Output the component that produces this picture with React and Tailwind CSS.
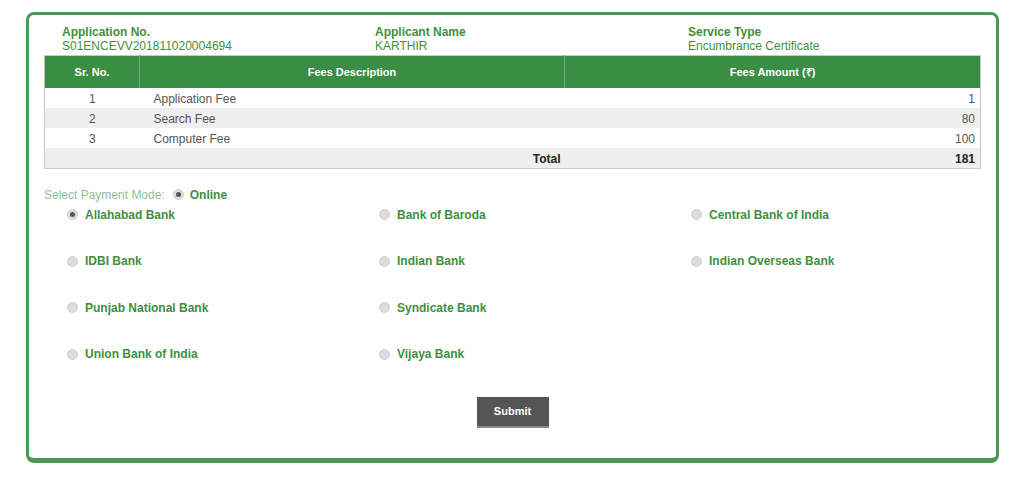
import React from 'react';

const FEES = [
  { sr: 1, desc: 'Application Fee', amt: 1 },
  { sr: 2, desc: 'Search Fee', amt: 80 },
  { sr: 3, desc: 'Computer Fee', amt: 100 },
];

const BANKS = [
  'Allahabad Bank', 'Bank of Baroda', 'Central Bank of India',
  'IDBI Bank', 'Indian Bank', 'Indian Overseas Bank',
  'Punjab National Bank', 'Syndicate Bank', '',
  'Union Bank of India', 'Vijaya Bank', '',
];

const Radio = ({ checked }) => (
  <span className="w-[11px] h-[11px] rounded-full bg-[#dcdcdc] border border-[#cfcfcf] flex items-center justify-center shrink-0">
    {checked && <span className="w-[5px] h-[5px] rounded-full bg-[#555]" />}
  </span>
);

const Info = ({ label, value }) => (
  <div className="leading-[14px] text-[12px]">
    <div className="font-bold text-[#3f8f3f]">{label}</div>
    <div className="text-[#3f8f3f]">{value}</div>
  </div>
);

export default function App() {
  return (
    <div className="w-[1024px] h-[480px] bg-white pt-[12px] pl-[26px]" style={{ fontFamily: '"Liberation Sans", Arial, sans-serif' }}>
      <div className="w-[973px] h-[451px] border-[3px] border-b-[5px] border-[#4a9a55] rounded-[8px] pt-[10px] px-[15px]">
        <div className="grid grid-cols-[313px_313px_313px] pl-[18px]">
          <Info label="Application No." value="S01ENCEVV201811020004694" />
          <Info label="Applicant Name" value="KARTHIR" />
          <Info label="Service Type" value="Encumbrance Certificate" />
        </div>

        <table className="w-[937px] mt-[2px] border border-[#c9c9c9] border-collapse text-[12px] text-[#555]">
          <thead>
            <tr className="bg-[#3b8d46] text-white h-[32px] text-[11px] font-bold">
              <th className="w-[95px] border-r border-[#6fb07a] font-bold">Sr. No.</th>
              <th className="w-[425px] border-r border-[#6fb07a] font-bold">Fees Description</th>
              <th className="font-bold">Fees Amount (₹)</th>
            </tr>
          </thead>
          <tbody>
            {FEES.map((f, i) => (
              <tr key={f.sr} className={`h-[20px] ${i % 2 ? 'bg-[#efefef]' : 'bg-white'}`}>
                <td className="text-center pt-[2px]">{f.sr}</td>
                <td className="pl-[14px] pt-[2px]">{f.desc}</td>
                <td className="text-right pr-[5px] pt-[2px]">{f.amt}</td>
              </tr>
            ))}
            <tr className="h-[20px] bg-[#efefef] font-bold text-[#222]">
              <td />
              <td className="text-right pr-[4px] pt-[2px]">Total</td>
              <td className="text-right pr-[5px] pt-[2px]">181</td>
            </tr>
          </tbody>
        </table>

        <div className="flex items-center mt-[19px] text-[12px] leading-[14px]">
          <span className="text-[#8fbf8f]">Select Payment Mode:</span>
          <span className="ml-[8px]"><Radio checked /></span>
          <span className="ml-[6px] font-bold text-[#3f8f3f]">Online</span>
        </div>

        <div className="grid grid-cols-[312px_312px_312px] pl-[23px] mt-[6px]">
          {BANKS.map((b, i) => (
            <div key={i} className="h-[46.5px] flex items-start">
              {b && (
                <div className="flex items-center gap-[7px] h-[14px] text-[12px] font-bold text-[#3f8f3f]">
                  <Radio checked={i === 0} />
                  <span>{b}</span>
                </div>
              )}
            </div>
          ))}
        </div>

        <div className="flex justify-center mt-[3px]">
          <button className="w-[72px] h-[31px] bg-[#555] text-white text-[11px] font-bold border-b-2 border-[#888]">Submit</button>
        </div>
      </div>
    </div>
  );
}
